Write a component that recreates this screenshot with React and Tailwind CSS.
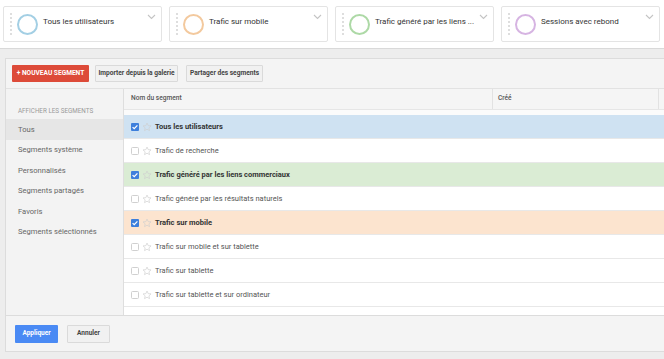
import React from 'react';

const cards = [
  { label: 'Tous les utilisateurs', ring: 'border-[#a3cfe4]' },
  { label: 'Trafic sur mobile', ring: 'border-[#f3c99e]' },
  { label: 'Trafic généré par les liens ...', ring: 'border-[#add9a6]' },
  { label: 'Sessions avec rebond', ring: 'border-[#d6b4e2]' },
];

const menu = [
  'Tous',
  'Segments système',
  'Personnalisés',
  'Segments partagés',
  'Favoris',
  'Segments sélectionnés',
];

const rows = [
  { name: 'Tous les utilisateurs', checked: true, bg: 'bg-[#cfe2f2]' },
  { name: 'Trafic de recherche' },
  { name: 'Trafic généré par les liens commerciaux', checked: true, bg: 'bg-[#daecd4]' },
  { name: 'Trafic généré par les résultats naturels' },
  { name: 'Trafic sur mobile', checked: true, bg: 'bg-[#fce4cf]' },
  { name: 'Trafic sur mobile et sur tablette' },
  { name: 'Trafic sur tablette' },
  { name: 'Trafic sur tablette et sur ordinateur' },
  { name: '' },
];

function Chevron() {
  return (
    <svg width="9" height="6" viewBox="0 0 9 6" className="absolute right-[5px] top-[7px]">
      <path d="M1 1l3.5 3.5L8 1" fill="none" stroke="#c4c4c4" strokeWidth="1.1" />
    </svg>
  );
}

function Checkbox({ checked }) {
  if (checked) {
    return (
      <svg width="8" height="8" viewBox="0 0 8 8" className="shrink-0">
        <rect x="0" y="0" width="8" height="8" rx="1" fill="#3d7fdc" />
        <path d="M1.6 4.1l1.6 1.6L6.4 2.3" fill="none" stroke="#fff" strokeWidth="1.2" />
      </svg>
    );
  }
  return (
    <svg width="8" height="8" viewBox="0 0 8 8" className="shrink-0">
      <rect x="0.5" y="0.5" width="7" height="7" rx="1" fill="#fff" stroke="#d0d0d0" />
    </svg>
  );
}

function Star() {
  return (
    <svg width="10" height="10" viewBox="0 0 24 24" className="shrink-0">
      <path
        d="M12 2.5l2.9 6.2 6.8.7-5.1 4.6 1.5 6.7L12 17.3l-5.9 3.4 1.5-6.7-5.1-4.6 6.8-.7z"
        fill="none"
        stroke="#cfcfcf"
        strokeWidth="1.6"
        strokeLinejoin="round"
      />
    </svg>
  );
}

function SegmentCard({ label, ring }) {
  return (
    <div className="relative w-[159px] h-[36px] shrink-0 bg-white border border-[#e4e4e4] rounded-[2px] flex items-center">
      <div className="ml-[6px] w-[2px] h-[22px] border-l-2 border-dotted border-[#dedede]" />
      <div className={`ml-[5px] w-[21px] h-[21px] rounded-full border-[2.5px] ${ring}`} />
      <span className="ml-[5px] text-[8px] text-[#333] -mt-[4px]">{label}</span>
      <Chevron />
    </div>
  );
}

export default function App() {
  return (
    <div
      className="w-[664px] h-[359px] overflow-hidden bg-[#ededed]"
      style={{ fontFamily: 'Roboto, "Liberation Sans", sans-serif' }}
    >
      <div className="h-[49px] bg-white border-b border-[#d9d9d9] flex gap-[7px] pl-[3px] pt-[6px]">
        {cards.map(c => (
          <SegmentCard key={c.label} {...c} />
        ))}
      </div>

      <div className="mt-[9px] ml-[5px] w-[700px] h-[294px] bg-[#f4f4f4] border border-[#dcdcdc] flex flex-col">
        <div className="h-[29px] flex items-start pl-[6px] pt-[6px] shrink-0">
          <button className="h-[17px] w-[77px] bg-[#dd4b39] text-white text-[6.6px] font-bold rounded-[1px]">
            + NOUVEAU SEGMENT
          </button>
          <button className="ml-[6px] h-[17px] w-[83px] bg-[#f1f1f1] border border-[#dadada] text-[#444] text-[6.6px] font-bold rounded-[1px]">
            Importer depuis la galerie
          </button>
          <button className="ml-[8px] h-[17px] w-[77px] bg-[#f1f1f1] border border-[#dadada] text-[#444] text-[6.6px] font-bold rounded-[1px]">
            Partager des segments
          </button>
        </div>

        <div className="h-[227px] flex border-t border-[#e2e2e2] shrink-0">
          <div className="w-[117px] shrink-0 bg-[#f3f3f3] pt-[18px]">
            <div className="pl-[12px] text-[6.3px] text-[#9a9a9a] leading-[8px]">AFFICHER LES SEGMENTS</div>
            <div className="mt-[4px]">
              {menu.map((m, i) => (
                <div
                  key={m}
                  className={`h-[20.5px] flex items-center pl-[12px] text-[7.6px] text-[#666] ${i === 0 ? 'bg-[#e6e6e6]' : ''}`}
                >
                  {m}
                </div>
              ))}
            </div>
          </div>

          <div className="flex-1 bg-white border-l border-[#dedede] flex flex-col overflow-hidden">
            <div className="h-[21px] shrink-0 bg-[#f5f5f5] border-b border-[#e6e6e6] flex text-[6.6px] font-medium text-[#555]">
              <div className="w-[368px] pl-[7px] flex items-center">Nom du segment</div>
              <div className="w-[166px] border-l border-[#e2e2e2] pl-[5px] flex items-center">Créé</div>
              <div className="flex-1 border-l border-[#e2e2e2]" />
            </div>
            <div className="h-[5px] shrink-0 bg-[#fbfbfb]" />
            {rows.map((r, i) => (
              <div
                key={i}
                className={`h-[24px] shrink-0 flex items-center pl-[7px] border-b border-[#e8e8e8] ${r.bg || 'bg-white'}`}
              >
                <Checkbox checked={r.checked} />
                <span className="ml-[3px]">
                  <Star />
                </span>
                {r.name && (
                  <span
                    className={`ml-[3px] text-[7.5px] ${r.checked ? 'font-bold text-[#333]' : 'text-[#555]'}`}
                  >
                    {r.name}
                  </span>
                )}
              </div>
            ))}
          </div>
        </div>

        <div className="flex-1 border-t border-[#dcdcdc] flex items-start gap-[9px] pl-[9px] pt-[9px]">
          <button className="h-[18px] w-[43px] bg-[#4a8af4] text-white text-[6.5px] font-bold rounded-[1px]">
            Appliquer
          </button>
          <button className="h-[18px] w-[43px] bg-[#f1f1f1] border border-[#dadada] text-[#444] text-[6.5px] font-bold rounded-[1px]">
            Annuler
          </button>
        </div>
      </div>
    </div>
  );
}
